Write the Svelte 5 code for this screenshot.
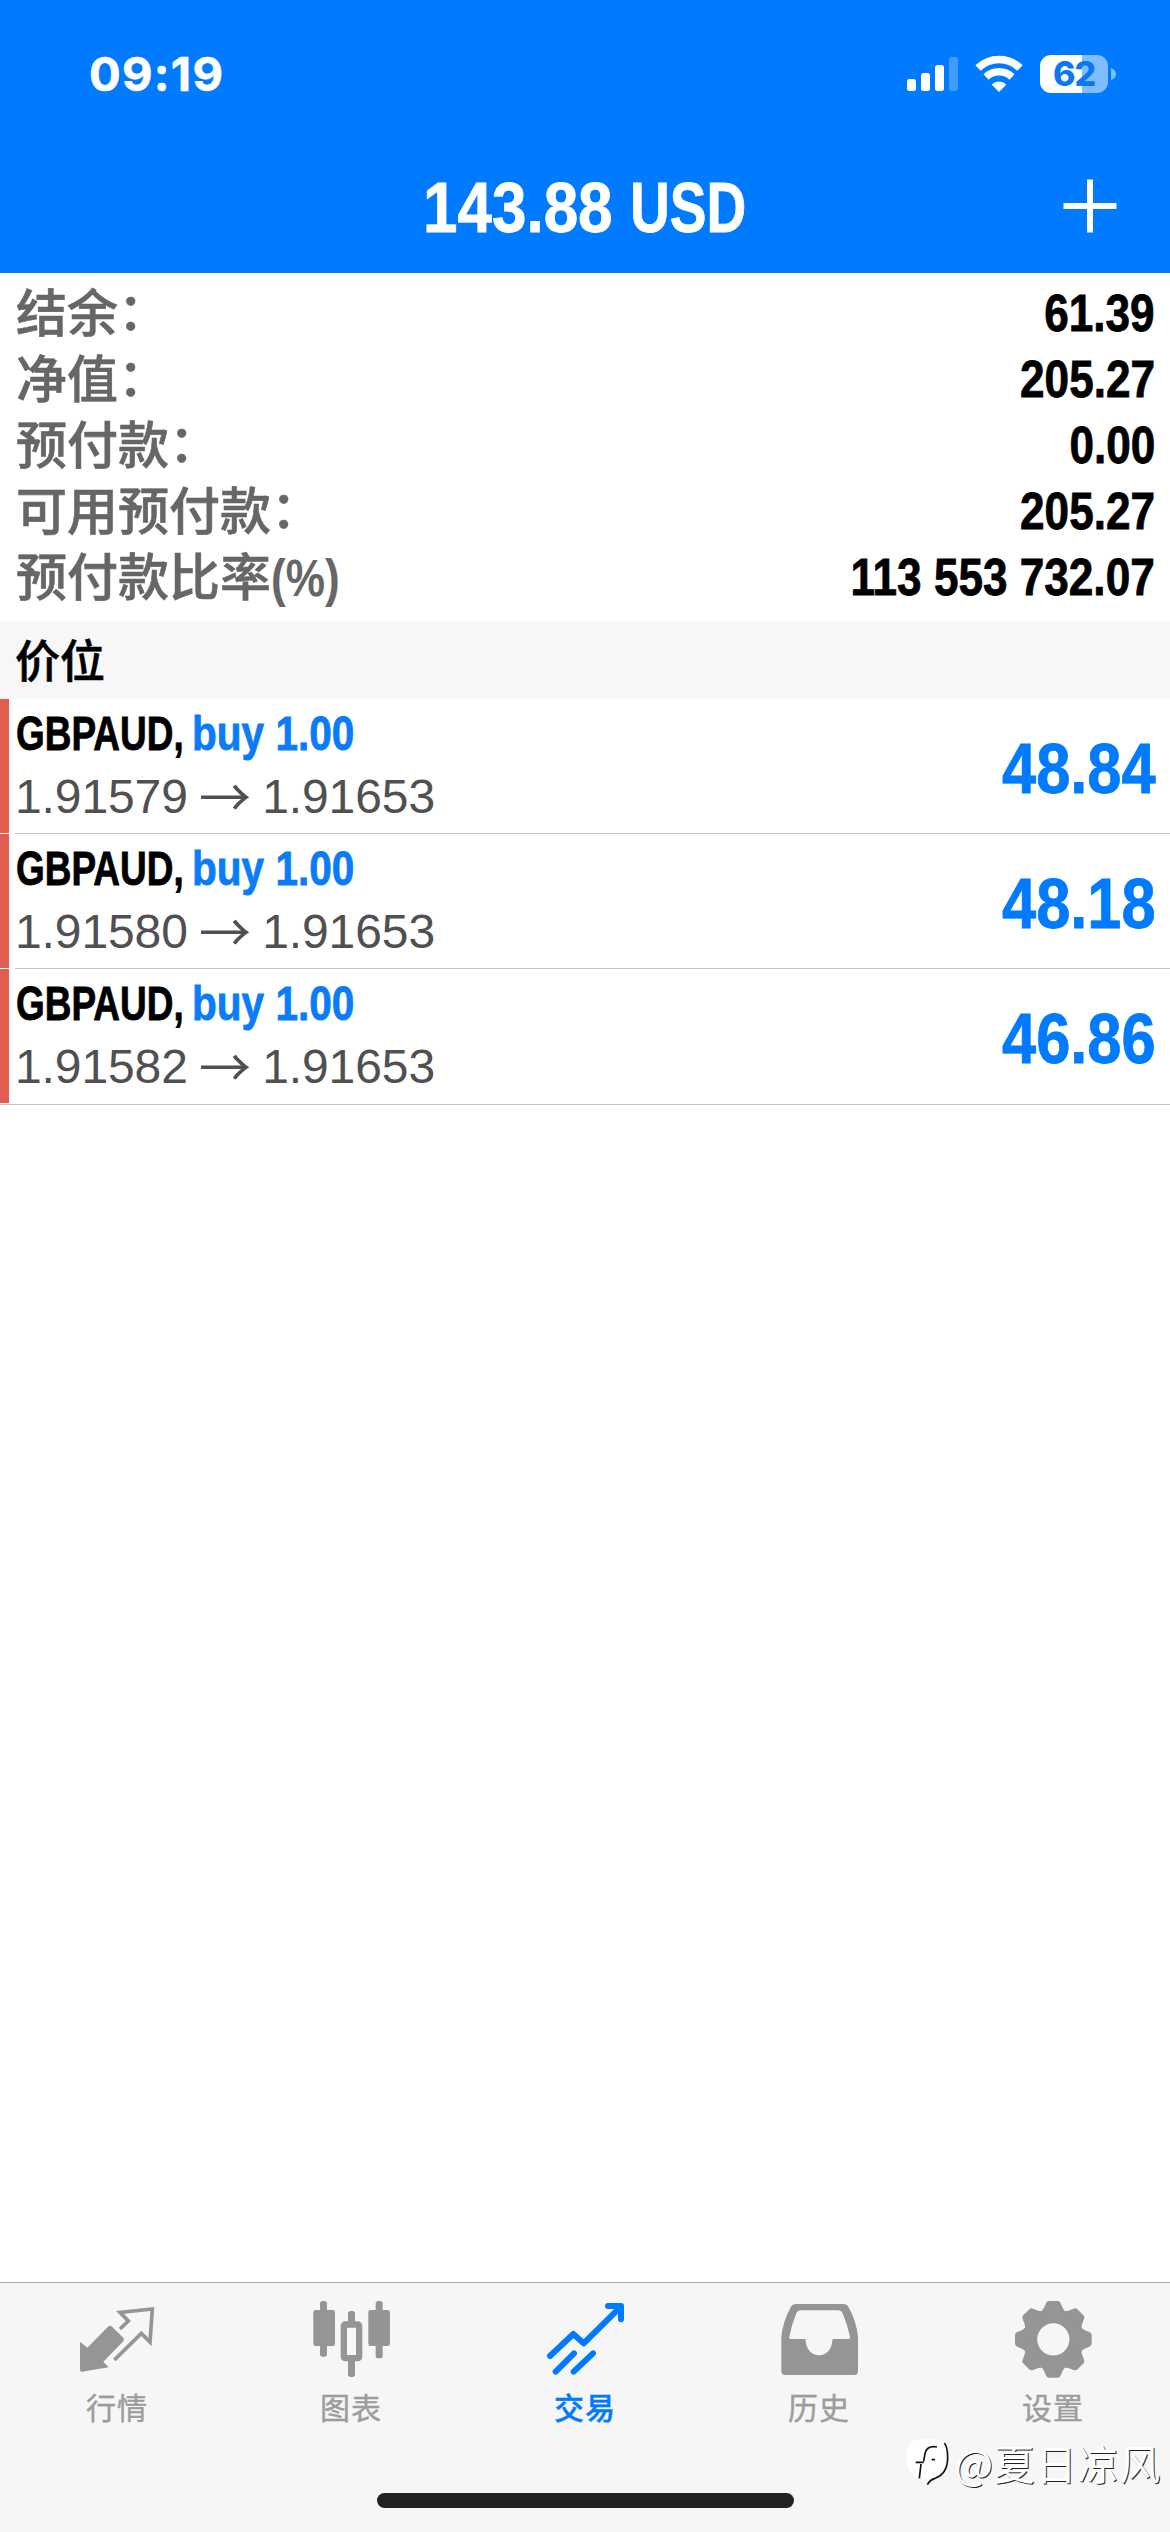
<script>

let account = [
  { label: '结余', colon: true, value: '61.39' },
  { label: '净值', colon: true, value: '205.27' },
  { label: '预付款', colon: true, value: '0.00' },
  { label: '可用预付款', colon: true, value: '205.27' },
  { label: '预付款比率', suffix: '(%)', value: '113 553 732.07' },
];

let positions = [
  { symbol: 'GBPAUD', side: 'buy 1.00', open: '1.91579', current: '1.91653', profit: '48.84' },
  { symbol: 'GBPAUD', side: 'buy 1.00', open: '1.91580', current: '1.91653', profit: '48.18' },
  { symbol: 'GBPAUD', side: 'buy 1.00', open: '1.91582', current: '1.91653', profit: '46.86' },
];

let tabs = [
  { id: 'quotes', name: '行情' },
  { id: 'chart', name: '图表' },
  { id: 'trade', name: '交易' },
  { id: 'history', name: '历史' },
  { id: 'settings', name: '设置' },
];

let active = 'trade';
let teeth = [0, 45, 90, 135, 180, 225, 270, 315];

</script>

<div class="screen">
  <header>
    <div class="status">
      <span class="time">09:19</span>
      <div class="indicators">
        <svg class="signal" width="52" height="36" viewBox="0 0 52 36">
          <rect x="0" y="23" width="9" height="12" rx="2.5"/>
          <rect x="14" y="17" width="9" height="18" rx="2.5"/>
          <rect x="28" y="9" width="9" height="26" rx="2.5"/>
          <rect x="42" y="1" width="9" height="34" rx="2.5" opacity="0.25"/>
        </svg>
        <svg class="wifi" width="50" height="38" viewBox="0 0 50 38">
          <path d="M4 13 A30 30 0 0 1 46 13" fill="none" stroke="#fff" stroke-width="7.5"/>
          <path d="M12 22 A19 19 0 0 1 38 22" fill="none" stroke="#fff" stroke-width="7.5"/>
          <path d="M25 37 L17.6 29.4 A11 11 0 0 1 32.4 29.4 Z"/>
        </svg>
        <div class="battery"><span>62</span></div>
        <svg class="nub" width="5" height="12" viewBox="0 0 5 12"><path d="M0 0 Q5 2 5 6 Q5 10 0 12Z" opacity="0.5"/></svg>
      </div>
    </div>
    <div class="nav">
      <h1><span class="amount">143.88</span><span class="currency">USD</span></h1>
      <button class="add" aria-label="add">
        <svg width="54" height="54" viewBox="0 0 54 54"><path d="M27 0.500V53.500M0.500 27H53.500" stroke="#fff" stroke-width="6"/></svg>
      </button>
    </div>
  </header>

  <section class="account">
    {#each account as row}
      <div class="account-row">
        <span class="label">{row.label}{#if row.colon}<i>：</i>{/if}{#if row.suffix}<b>{row.suffix}</b>{/if}</span>
        <span class="value">{row.value}</span>
      </div>
    {/each}
  </section>

  <h2>价位</h2>

  <section class="positions">
    {#each positions as p}
      <div class="position">
        <div class="mark"></div>
        <div class="position-body">
          <div>
            <div class="symbol"><span class="name">{p.symbol},</span><span class="side">{p.side}</span></div>
            <div class="price">{p.open} <span>→</span> {p.current}</div>
          </div>
          <div class="profit">{p.profit}</div>
        </div>
      </div>
    {/each}
  </section>

  <footer>
    <nav>
      {#each tabs as tab}
        <button class="tab {active == tab.id ? 'active' : ''}" on:click={() => active = tab.id}>
          <svg width="78" height="78" viewBox="0 0 234 234">
            {#if tab.id == 'quotes'}
              <path d="M6 125L28 143L90 80Q96 74 102 80L136 113Q141 118 136 124L76 185L92 202L12 215Q6 215 6 210Z"/>
              <path class="line" stroke-width="11" d="M126 87L151 63L126 37L223 27L216 126L190 100L109 180"/>
            {:else if tab.id == 'chart'}
              <rect x="4" y="30" width="65" height="108" rx="7"/>
              <rect x="24" y="3" width="21" height="167" rx="8"/>
              <rect x="169" y="30" width="65" height="108" rx="7"/>
              <rect x="191" y="3" width="21" height="172" rx="8"/>
              <rect class="line" x="95.500" y="73.500" width="46" height="101" rx="4" stroke-width="19"/>
              <rect x="108" y="33" width="21" height="45" rx="8"/>
              <rect x="108" y="175" width="21" height="56" rx="8"/>
            {:else if tab.id == 'trade'}
              <path class="line round" stroke-width="18" d="M12 168L82 102L113 130L222 22M186 18H225V58M29 215L84 160M83 215L141 160"/>
            {:else if tab.id == 'history'}
              <path fill-rule="evenodd" d="M48 12H190Q200 12 206 22Q230 66 234 112V213Q234 225 222 225H16Q4 225 4 213V112Q8 66 32 22Q38 12 48 12ZM62 31Q53 31 49 40Q35 74 28 110Q27 117 34 117H72Q77 117 77 121A40 45 0 0 0 157 121Q157 117 162 117H204Q211 117 210 110Q202 74 188 40Q184 31 174 31Z"/>
            {:else}
              <circle class="line" cx="118" cy="118" r="70" stroke-width="43"/>
              {#each teeth as deg}
                <path transform="rotate({deg} 118 118)" d="M80 38Q91 26 95 12Q98 3 106 3H130Q138 3 141 12Q145 26 156 38Z"/>
              {/each}
            {/if}
          </svg>
          <span>{tab.name}</span>
        </button>
      {/each}
    </nav>
    <div class="home"></div>
    <div class="watermark">
      <svg width="42" height="48" viewBox="0 0 126 144">
        <path d="M34 4H88Q122 4 122 50Q122 106 70 124L50 120Q0 122 0 60Q0 4 34 4Z" fill="#fff"/>
        <path d="M112 15Q122 26 122 60Q121 108 84 121Q68 126 61 140" fill="none" stroke="#111" stroke-width="5"/>
        <path d="M90 27Q60 22 54 46L50 70M42 78L37 121M26 73H50M74 65H84" fill="none" stroke="#111" stroke-width="5"/>
      </svg>
      <span>@夏日凉风</span>
    </div>
  </footer>
</div>

<style>

:global(body) {
  margin: 0;
  background: #fff;
}

.screen {
  width: 1170px;
  height: 2532px;
  display: flex;
  flex-direction: column;
  overflow: hidden;
  background: #fff;
  font-family: "Liberation Sans", "Noto Sans CJK SC", sans-serif;
}

button {
  border: 0;
  padding: 0;
  background: none;
  font-family: inherit;
}

header {
  height: 273px;
  background: #007aff;
  color: #fff;
}

.status {
  height: 148px;
  display: flex;
  justify-content: space-between;
  padding: 0 54px 0 89px;
}

.time {
  margin-top: 46px;
  font: 700 47px/56px Inter, sans-serif;
  letter-spacing: 1.3px;
  -webkit-text-stroke: 0.6px #fff;
}

.indicators {
  display: flex;
  align-items: flex-start;
  padding-top: 55px;
}

.indicators svg {
  fill: #fff;
}

.signal {
  margin-top: 1px;
}

.wifi {
  margin-left: 15px;
}

.battery {
  width: 68px;
  height: 38px;
  margin-left: 16px;
  border-radius: 11px;
  background: linear-gradient(90deg, #fff 42px, #80bdff 42px);
  color: #0b78f2;
  text-align: center;
  font: 800 34px/38px Inter, sans-serif;
  letter-spacing: -1px;
}

.indicators .nub {
  margin: 13px 0 0 3px;
}

.nav {
  height: 120px;
  display: grid;
  grid-template-columns: 1fr auto 1fr;
  align-items: center;
}

/* condensed bold: regular width squeezed horizontally */
.amount, .currency, .value, .name, .side, .profit, .label b {
  display: inline-block;
  white-space: nowrap;
  font-weight: bold;
  transform: scaleX(0.865);
  transform-origin: left;
  -webkit-text-stroke: 0.8px currentColor;
}

h1 {
  grid-column: 2;
  margin: 0;
  width: 324px;
  display: flex;
  font-size: 71px;
  line-height: 120px;
}

.amount {
  width: 207px;
  transform: scaleX(0.873);
}

.currency {
  width: 117px;
  transform: scaleX(0.775);
}

.add {
  justify-self: end;
  margin: 0 53px 5px 0;
  height: 54px;
}

.account {
  height: 340px;
  padding: 8px 15px 0 16px;
}

.account-row {
  height: 66px;
  display: flex;
  justify-content: space-between;
  align-items: flex-start;
  font-size: 51px;
}

.label {
  color: #666;
  font-family: "Noto Sans CJK SC", sans-serif;
  font-weight: 500;
  line-height: 58px;
  -webkit-text-stroke: 0.6px #666;
}

.label i {
  font-style: normal;
  line-height: 1px;
  vertical-align: 2px;
}

.label b {
  font-family: "Liberation Sans", sans-serif;
  line-height: 1px;
  -webkit-text-stroke: 0;
}

.value {
  line-height: 65px;
  transform-origin: right;
}

h2 {
  height: 74px;
  margin: 0;
  padding: 0 0 4px 15px;
  background: #f7f7f7;
  font: 500 45px/75px "Noto Sans CJK SC", sans-serif;
  -webkit-text-stroke: 0.6px #000;
}

.position {
  height: 135px;
  display: flex;
  gap: 6px;
}

.mark {
  width: 9px;
  height: 134px;
  background: #e25c50;
}

.position-body {
  flex: 1;
  display: flex;
  align-items: center;
  justify-content: space-between;
  padding: 0 14px 2px 0;
  border-bottom: 1px solid #c4c4c6;
}

.positions {
  height: 405px;
  border-bottom: 1px solid #c4c4c6;
}

.position:last-child .position-body {
  border-bottom-color: transparent;
}

.symbol {
  display: flex;
  padding-left: 1px;
  font-size: 48px;
  line-height: 63px;
}

.name {
  width: 176px;
  transform: scaleX(0.77);
}

.side {
  color: #0a7cf8;
  transform: scaleX(0.845);
}

.price {
  color: #505052;
  font: 48px/63px "Liberation Sans", sans-serif;
  letter-spacing: -0.1px;
}

.price span {
  margin: 0 -2px;
  font-family: "Noto Sans CJK SC", sans-serif;
  font-size: 52px;
  line-height: 1px;
  vertical-align: -4px;
}

.profit {
  padding-top: 7px;
  color: #007aff;
  font-size: 71px;
  line-height: 80px;
  transform-origin: right;
}

footer {
  position: relative;
  height: 249px;
  margin-top: auto;
  border-top: 1px solid #a9a9ab;
  background: #f6f6f6;
}

nav {
  display: flex;
}

.tab {
  flex: 1;
  display: flex;
  flex-direction: column;
  align-items: center;
  padding-top: 17px;
  color: #9c9c9c;
}

.tab svg {
  fill: #959595;
}

.tab .line {
  fill: none;
  stroke: #959595;
}

.tab .round {
  stroke-linecap: round;
  stroke-linejoin: round;
}

.tab span {
  margin-top: 6px;
  font: 30px/44px "Noto Sans CJK SC", sans-serif;
  letter-spacing: 1px;
  -webkit-text-stroke: 0.4px currentColor;
}

.tab.active {
  color: #007aff;
}

.tab.active .line {
  stroke: #007aff;
}

.tab.active span {
  font-weight: 500;
}

.home {
  position: absolute;
  left: 377px;
  bottom: 24px;
  width: 417px;
  height: 15px;
  border-radius: 8px;
  background: #222;
}

.watermark {
  position: absolute;
  right: 9px;
  bottom: 42px;
  display: flex;
  align-items: center;
  gap: 5px;
  color: #fff;
  font: 41px/56px "Noto Sans CJK SC", sans-serif;
  letter-spacing: 0.8px;
  text-shadow: 1px 1px 0 #222;
}

</style>
